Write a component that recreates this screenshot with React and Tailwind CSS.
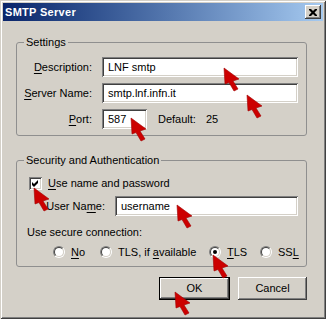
import React from "react";

const sunken =
  "shadow-[inset_1px_1px_0_#808080,inset_-1px_-1px_0_#ffffff,inset_2px_2px_0_#404040,inset_-2px_-2px_0_#d4d0c8]";
const raised =
  "shadow-[inset_-1px_-1px_0_#404040,inset_1px_1px_0_#ffffff,inset_-2px_-2px_0_#808080]";

function Field({ w, children }) {
  return (
    <div className={`h-[20px] ${w} bg-white ${sunken} flex items-center pl-[6px] leading-[13px]`}>
      {children}
    </div>
  );
}

function U({ children }) {
  return <span className="underline underline-offset-[2px]">{children}</span>;
}

function Radio({ checked }) {
  return (
    <div className="w-[12px] h-[12px] rounded-full border border-t-[#808080] border-l-[#808080] border-b-white border-r-white shrink-0">
      <div className="w-full h-full rounded-full border border-t-[#404040] border-l-[#404040] border-b-[#d4d0c8] border-r-[#d4d0c8] bg-white flex items-center justify-center">
        {checked && <div className="w-[4px] h-[4px] rounded-full bg-black" />}
      </div>
    </div>
  );
}

function Arrow({ x, y }) {
  return (
    <svg
      className="absolute pointer-events-none"
      style={{ left: x - 1, top: y - 1 }}
      width="18"
      height="26"
      viewBox="0 0 18 26"
    >
      <polygon
        points="1,1 2,17 6,15.5 11,24 15,22 10,14 16,12"
        fill="#cc0000"
        stroke="#a00000"
        strokeWidth="0.6"
        strokeLinejoin="round"
      />
    </svg>
  );
}

export default function App() {
  return (
    <div className="relative w-[326px] h-[319px] bg-[#d4d0c8] p-[3px] font-['Liberation_Sans',Arial,sans-serif] text-[11px] text-black shadow-[inset_1px_1px_0_#d4d0c8,inset_-1px_-1px_0_#404040,inset_2px_2px_0_#ffffff,inset_-2px_-2px_0_#808080]">
      {/* Title bar */}
      <div className="h-[18px] bg-gradient-to-r from-[#0a246a] to-[#a6caf0] flex items-center justify-between pl-[2px] pr-[2px]">
        <span className="text-white font-bold text-[11px] leading-[13px] tracking-[0.3px]">SMTP Server</span>
        <div className={`w-[16px] h-[14px] bg-[#d4d0c8] ${raised} flex items-center justify-center`}>
          <svg width="8" height="7" viewBox="0 0 8 7">
            <path d="M0 0h2l2 2l2-2h2v1l-2.5 2.5L8 6v1H6L4 5L2 7H0V6l2.5-2.5L0 1z" fill="#000" />
          </svg>
        </div>
      </div>

      <div className="ml-[13px] w-[291px] flex flex-col">
        {/* Settings */}
        <fieldset className="mt-[15px] border border-[#8f8f8f] rounded-[3px] pb-[6px]">
          <legend className="ml-[7px] px-[2px] leading-[13px]">Settings</legend>
          <div className="pt-[8px] grid grid-cols-[75px_196px] gap-x-[10px] gap-y-[6px] items-center">
            <div className="text-right">
              <U>D</U>escription:
            </div>
            <Field w="w-[196px]">LNF smtp</Field>
            <div className="text-right">
              <U>S</U>erver Name:
            </div>
            <Field w="w-[196px]">smtp.lnf.infn.it</Field>
            <div className="text-right">
              <U>P</U>ort:
            </div>
            <div className="flex items-center">
              <Field w="w-[45px]">587</Field>
              <span className="ml-[11px]">Default:</span>
              <span className="ml-[10px]">25</span>
            </div>
          </div>
        </fieldset>

        {/* Security */}
        <fieldset className="mt-[18px] border border-[#8f8f8f] rounded-[3px] pb-[8px]">
          <legend className="ml-[7px] px-[2px] leading-[13px]">Security and Authentication</legend>
          <div className="pt-[10px] flex flex-col">
            <div className="flex items-center pl-[12px] h-[13px]">
              <div className={`w-[13px] h-[13px] bg-white ${sunken} flex items-center justify-center`}>
                <svg width="7" height="7" viewBox="0 0 7 7">
                  <path d="M0 2 L2 4 L6 0 L6 3 L2 7 L0 5 Z" fill="#000" />
                </svg>
              </div>
              <span className="ml-[6px] leading-[13px]">
                <U>U</U>se name and password
              </span>
            </div>
            <div className="mt-[6px] flex items-center">
              <div className="w-[88px] text-right">
                User Na<U>m</U>e:
              </div>
              <div className="ml-[10px]">
                <Field w="w-[183px]">username</Field>
              </div>
            </div>
            <div className="mt-[10px] pl-[10px] leading-[13px]">Use secure connection:</div>
            <div className="mt-[7px] flex items-center h-[12px] pl-[36px]">
              <div className="w-[47px] flex items-center gap-[6px]">
                <Radio />
                <span className="leading-[13px]">
                  <U>N</U>o
                </span>
              </div>
              <div className="w-[109px] flex items-center gap-[6px]">
                <Radio />
                <span className="leading-[13px]">
                  TLS, if <U>a</U>vailable
                </span>
              </div>
              <div className="w-[51px] flex items-center gap-[6px]">
                <Radio checked />
                <span className="leading-[13px]">
                  <U>T</U>LS
                </span>
              </div>
              <div className="flex items-center gap-[6px]">
                <Radio />
                <span className="leading-[13px]">
                  SS<U>L</U>
                </span>
              </div>
            </div>
          </div>
        </fieldset>

        {/* Buttons */}
        <div className="mt-[10px] flex justify-end gap-[8px]">
          <div className="w-[71px] h-[23px] border border-black">
            <div className={`w-full h-full ${raised} flex items-center justify-center`}>OK</div>
          </div>
          <div className={`w-[69px] h-[23px] ${raised} flex items-center justify-center`}>Cancel</div>
        </div>
      </div>

      <Arrow x={224} y={68} />
      <Arrow x={247} y={95} />
      <Arrow x={131} y={118} />
      <Arrow x={34} y={188} />
      <Arrow x={177} y={205} />
      <Arrow x={213} y={255} />
      <Arrow x={175} y={292} />
    </div>
  );
}
